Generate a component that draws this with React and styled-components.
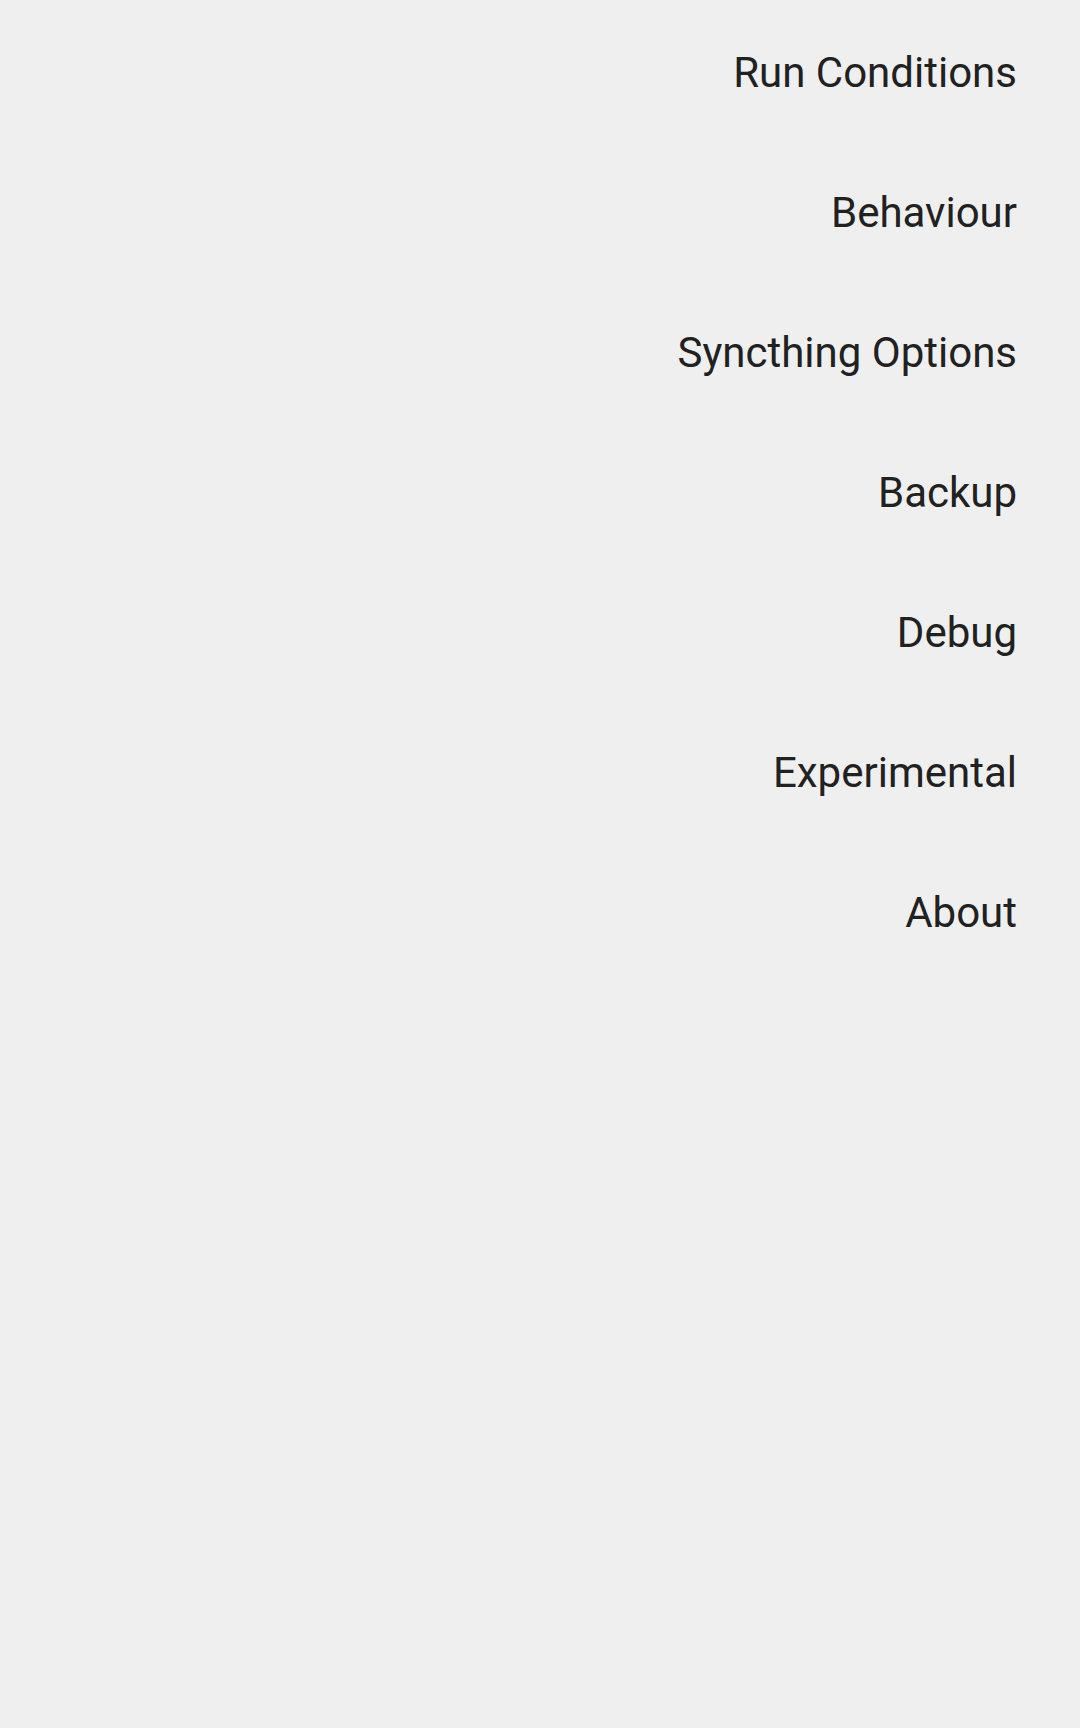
import React from "react";
import styled, { createGlobalStyle } from "styled-components";

const Global = createGlobalStyle`
  html, body { margin: 0; padding: 0; background: #efefef; }
  body { font-family: Roboto, "Noto Sans", sans-serif; }
`;

const Page = styled.div`
  width: 1080px;
  min-height: 1728px;
  background: #efefef;
  display: flex;
  flex-direction: column;
  padding-top: 2px;
  box-sizing: border-box;
`;

const Item = styled.div`
  height: 140px;
  display: flex;
  align-items: center;
  justify-content: flex-end;
  padding-right: 63px;
  font-size: 42px;
  color: #212121;
  box-sizing: border-box;
`;

const items = [
  "Run Conditions",
  "Behaviour",
  "Syncthing Options",
  "Backup",
  "Debug",
  "Experimental",
  "About",
];

export default function App() {
  return (
    <>
      <Global />
      <Page>
        {items.map((t) => (
          <Item key={t}>{t}</Item>
        ))}
      </Page>
    </>
  );
}
